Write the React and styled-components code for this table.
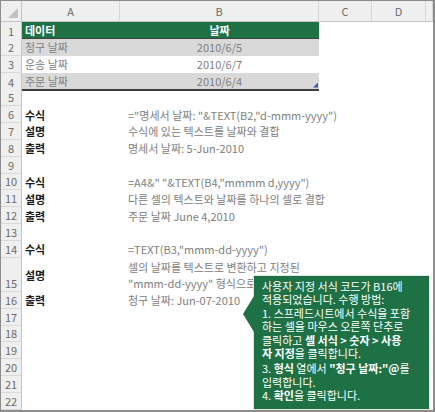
import styled, { createGlobalStyle } from "styled-components";

const GlobalStyle = createGlobalStyle`
  body {
    margin: 0;
    background: #fff;
    font-family: "Noto Sans CJK KR", "Noto Sans", sans-serif;
  }
`;

const COLS = "21px 98px 199px 53px 54px 1fr";
const GREEN = "#1e7145";

const Frame = styled.div`
  position: relative;
  width: 435px;
  height: 412px;
  box-sizing: border-box;
  border: 1px solid #8c8c8c;
  border-right-width: 2px;
  border-bottom-width: 2px;
  overflow: hidden;
  background: #fff;
`;

const Row = styled.div`
  display: grid;
  grid-template-columns: ${COLS};
  height: ${(p) => p.$h}px;
`;

const ColHead = styled.div`
  display: flex;
  align-items: center;
  justify-content: center;
  background: #efefef;
  border-right: 1px solid #d6d6d6;
  border-bottom: 1px solid #c4c4c4;
  color: #6b6b6b;
  font-size: 11px;
`;

const Corner = styled(ColHead)`
  position: relative;
  border-right-color: #c4c4c4;
  &::after {
    content: "";
    position: absolute;
    right: 3px;
    bottom: 3px;
    width: 10px;
    height: 10px;
    background: #c2c2c2;
    clip-path: polygon(100% 0, 100% 100%, 0 100%);
  }
`;

const RowNum = styled.div`
  display: flex;
  align-items: flex-end;
  justify-content: center;
  background: #efefef;
  border-right: 1px solid #c4c4c4;
  border-bottom: 1px solid #d9d9d9;
  color: #6b6b6b;
  font-size: 11px;
  line-height: 15px;
`;

const Cell = styled.div`
  position: relative;
  display: flex;
  align-items: center;
  justify-content: ${(p) => (p.$center ? "center" : "flex-start")};
  padding-left: ${(p) => p.$indent ?? 3}px;
  background: ${(p) => p.$bg || "transparent"};
  border-bottom: ${(p) => (p.$rule ? "2px solid #3f3f3f" : "none")};
  box-sizing: border-box;
  color: ${(p) => p.$color || "#808080"};
  font-size: 11px;
  font-weight: ${(p) => (p.$bold ? 700 : 400)};
  line-height: 16px;
  white-space: nowrap;
  overflow: visible;
`;

const Handle = styled.span`
  position: absolute;
  right: 1px;
  bottom: 1px;
  width: 5px;
  height: 5px;
  background: #2f5fb3;
  clip-path: polygon(100% 0, 100% 100%, 0 100%);
`;

const Callout = styled.div`
  position: absolute;
  left: 252px;
  top: 274px;
  width: 177px;
  box-sizing: border-box;
  padding: 4px 4px 6px 8px;
  background: ${GREEN};
  border: 1px solid #dfe7e2;
  color: #fff;
  font-size: 11px;
  line-height: 13.4px;
  white-space: nowrap;
  &::before {
    content: "";
    position: absolute;
    left: -11px;
    top: 20px;
    width: 11px;
    height: 36px;
    background: ${GREEN};
    clip-path: polygon(100% 0, 0 50%, 100% 100%);
  }
`;

const Para = styled.p`
  margin: 0 0 ${(p) => p.$gap ?? 0}px;
`;

const B = styled.b`
  font-weight: 700;
`;

const ROW_H = 16.85;

const rows = [
  { n: 1, a: "데이터", b: "날짜", head: true },
  { n: 2, a: "청구 날짜", b: "2010/6/5", fill: true },
  { n: 3, a: "운송 날짜", b: "2010/6/7" },
  { n: 4, a: "주문 날짜", b: "2010/6/4", fill: true, last: true },
  { n: 5 },
  { n: 6, a: "수식", b: '="명세서 날짜: "&TEXT(B2,"d-mmm-yyyy")' },
  { n: 7, a: "설명", b: "수식에 있는 텍스트를 날짜와 결합" },
  { n: 8, a: "출력", b: "명세서 날짜: 5-Jun-2010" },
  { n: 9 },
  { n: 10, a: "수식", b: '=A4&" "&TEXT(B4,"mmmm d,yyyy")' },
  { n: 11, a: "설명", b: "다른 셀의 텍스트와 날짜를 하나의 셀로 결합" },
  { n: 12, a: "출력", b: "주문 날짜 June 4,2010" },
  { n: 13 },
  { n: 14, a: "수식", b: '=TEXT(B3,"mmm-dd-yyyy")' },
  {
    n: 15,
    a: "설명",
    b: (
      <>
        셀의 날짜를 텍스트로 변환하고 지정된
        <br />
        "mmm-dd-yyyy" 형식으로 표시
      </>
    ),
    tall: true,
  },
  { n: 16, a: "출력", b: "청구 날짜: Jun-07-2010" },
  { n: 17 },
  { n: 18 },
  { n: 19 },
  { n: 20 },
  { n: 21 },
  { n: 22 },
];

const SheetRow = ({ r }) => {
  const table = r.n <= 4;
  const bg = r.head ? GREEN : r.fill ? "#d9d9d9" : undefined;
  const color = r.head ? "#fff" : table ? "#808080" : undefined;
  return (
    <Row $h={r.tall ? 34 : ROW_H}>
      <RowNum>{r.n}</RowNum>
      <Cell $bg={bg} $rule={r.head || r.last} $bold={r.head || (!table && r.a)} $color={table ? color : "#1a1a1a"}>
        {r.a}
      </Cell>
      <Cell
        $bg={bg}
        $rule={r.head || r.last}
        $center={table}
        $indent={table ? 0 : 8}
        $bold={r.head}
        $color={color}
      >
        {r.b}
        {r.last && <Handle />}
      </Cell>
      <Cell />
      <Cell />
      <Cell />
    </Row>
  );
};

export default function App() {
  return (
    <>
      <GlobalStyle />
      <Frame>
        <Row $h={21}>
          <Corner />
          <ColHead>A</ColHead>
          <ColHead>B</ColHead>
          <ColHead>C</ColHead>
          <ColHead>D</ColHead>
          <ColHead />
        </Row>
        {rows.map((r) => (
          <SheetRow key={r.n} r={r} />
        ))}
        <Callout>
          <Para>
            사용자 지정 서식 코드가 B16에
            <br />
            적용되었습니다. 수행 방법:
          </Para>
          <Para $gap={2}>
            1. 스프레드시트에서 수식을 포함
            <br />
            하는 셀을 마우스 오른쪽 단추로
            <br />
            클릭하고 <B>셀 서식 &gt; 숫자 &gt; 사용</B>
            <br />
            <B>자 지정</B>을 클릭합니다.
          </Para>
          <Para>
            3. <B>형식</B> 열에서 <B>"청구 날짜:"@</B>를
            <br />
            입력합니다.
          </Para>
          <Para>
            4. <B>확인</B>을 클릭합니다.
          </Para>
        </Callout>
      </Frame>
    </>
  );
}
